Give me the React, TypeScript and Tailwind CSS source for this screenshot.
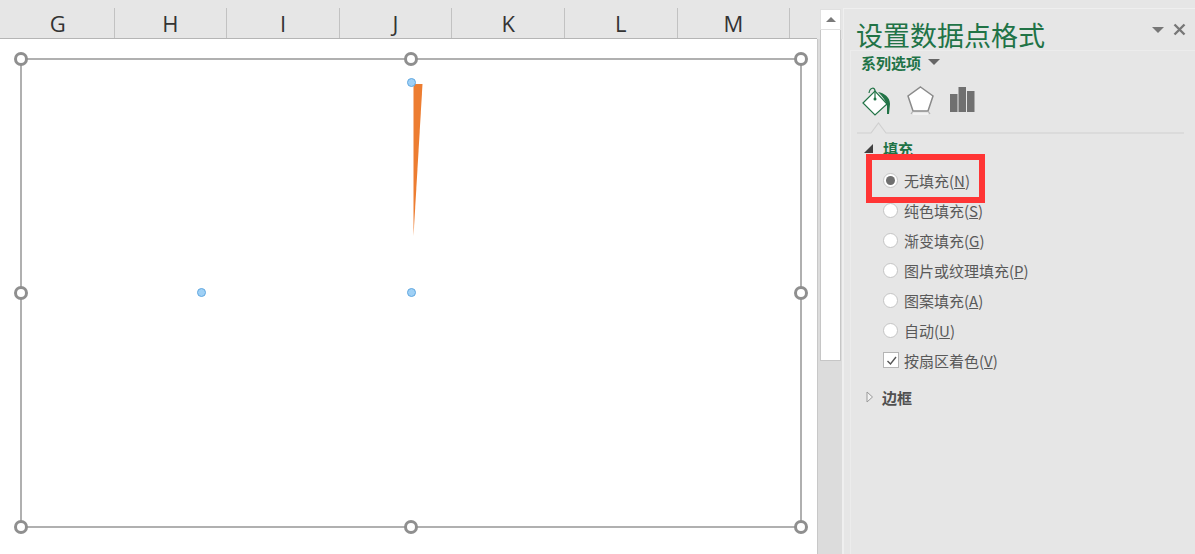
import React from "react";

const columns = ["G", "H", "I", "J", "K", "L", "M"];

const fillOptions = [
  { label: "无填充", key: "N", checked: true },
  { label: "纯色填充", key: "S", checked: false },
  { label: "渐变填充", key: "G", checked: false },
  { label: "图片或纹理填充", key: "P", checked: false },
  { label: "图案填充", key: "A", checked: false },
  { label: "自动", key: "U", checked: false },
];

function Handle({ className }: { className: string }) {
  return (
    <div
      className={
        "absolute w-[14px] h-[14px] rounded-full bg-white border-[3px] border-[#8f8f8f] " +
        className
      }
    />
  );
}

function Dot({ className }: { className: string }) {
  return (
    <div
      className={
        "absolute w-[9px] h-[9px] rounded-full bg-[#9fd0f5] border border-[#62a8e0] " +
        className
      }
    />
  );
}

function BucketIcon() {
  return (
    <svg width="32" height="34" viewBox="0 0 32 34" className="shrink-0 ml-[-1px]">
      <path d="M3 17 L15 5 L27 18 L15 29 Z" fill="#fff" stroke="#217346" strokeWidth="1.2" />
      <path d="M9 7 C10 1 15 1 15 5 L15 12" fill="none" stroke="#217346" strokeWidth="1.2" />
      <circle cx="15" cy="13" r="1.5" fill="#217346" />
      <path d="M18 6 C24 7 30 11 30 18 L29 28 L27 28 L27 20 C26 15 23 11 18 6 Z" fill="#217346" />
    </svg>
  );
}

function ShapeIcon() {
  return (
    <svg width="30" height="32" viewBox="0 0 30 32" className="shrink-0">
      <path d="M14.5 2 L27 11 L22 26 L7 26 L2 11 Z" fill="#fff" stroke="#8a8a8a" strokeWidth="1.5" />
      <path d="M7 26 L5 29 M22 26 L24 29" stroke="#b0b0b0" strokeWidth="1.2" />
      <rect x="7" y="28" width="15" height="2" fill="#f2f2f2" />
    </svg>
  );
}

function BarsIcon() {
  return (
    <svg width="26" height="28" viewBox="0 0 26 28" className="shrink-0">
      <rect x="0" y="8" width="7.5" height="18" fill="#707070" />
      <rect x="8.5" y="1" width="7.5" height="25" fill="#707070" />
      <rect x="17" y="5" width="7.5" height="21" fill="#707070" />
    </svg>
  );
}

function OptionRow({
  label,
  hotkey,
  checked,
}: {
  label: string;
  hotkey: string;
  checked: boolean;
}) {
  return (
    <div className="flex items-center h-[30px] pl-[32px] text-[15px] text-[#595959]">
      <div className="w-[15px] h-[15px] rounded-full bg-white border border-[#c4c4c4] flex items-center justify-center shrink-0">
        {checked && <div className="w-[9px] h-[9px] rounded-full bg-[#6f6f6f]" />}
      </div>
      <span className="ml-[6px] leading-none">
        {label}(<u>{hotkey}</u>)
      </span>
    </div>
  );
}

export default function App() {
  return (
    <div
      className="flex w-[1195px] h-[554px] overflow-hidden bg-[#e6e6e6]"
      style={{ fontFamily: '"Noto Sans CJK SC", "Noto Sans", sans-serif' }}
    >
      {/* sheet */}
      <div className="flex flex-col w-[817px] shrink-0">
        <div className="flex h-[39px] pt-[8px] pl-[2px] border-b border-[#b5b5b5] shrink-0">
          {columns.map((c) => (
            <div
              key={c}
              className="w-[112.6px] shrink-0 flex items-center justify-center border-r border-[#c2c2c2] text-[22px] leading-none text-[#333333]"
              style={{ fontFamily: '"Open Sans", sans-serif' }}
            >
              {c}
            </div>
          ))}
        </div>
        <div className="flex-1 bg-white pt-[19px] pl-[20px]">
          <div className="relative w-[782px] h-[470px] border-[2px] border-[#b0b0b0] bg-white">
            <Handle className="left-[-8px] top-[-8px]" />
            <Handle className="left-[382px] top-[-8px]" />
            <Handle className="right-[-8px] top-[-8px]" />
            <Handle className="left-[-8px] top-[226px]" />
            <Handle className="right-[-8px] top-[226px]" />
            <Handle className="left-[-8px] bottom-[-8px]" />
            <Handle className="left-[382px] bottom-[-8px]" />
            <Handle className="right-[-8px] bottom-[-8px]" />
            <svg
              width="12"
              height="152"
              viewBox="0 0 12 152"
              className="absolute left-[390px] top-[24px]"
            >
              <path d="M1.5 0 L10.5 0 L1.5 152 Z" fill="#ed7d31" />
            </svg>
            <Dot className="left-[385px] top-[18px]" />
            <Dot className="left-[175px] top-[228px]" />
            <Dot className="left-[385px] top-[228px]" />
          </div>
        </div>
      </div>

      {/* scrollbar */}
      <div className="w-[26px] shrink-0 flex flex-col relative">
        <div className="h-[39px]" />
        <div className="flex-1 bg-[#dcdcdc] border-l border-[#c8c8c8] border-r border-r-[#efefef]" />
        <div className="absolute left-[3px] top-[9px] w-[21px] flex flex-col">
          <div className="h-[21px] bg-white border border-[#e0e0e0] flex items-center justify-center">
            <div className="w-0 h-0 border-l-[5px] border-r-[5px] border-b-[5px] border-l-transparent border-r-transparent border-b-[#7a7a7a]" />
          </div>
          <div className="h-[331px] bg-white border border-t-0 border-[#c6c6c6]" />
        </div>
      </div>

      {/* format pane */}
      <div className="flex-1 mt-[8px] border-t border-l border-[#efefef] flex flex-col">
        <div className="flex h-[41px] shrink-0 pl-[13px] pr-[9px] items-center justify-between">
          <span className="text-[27px] leading-none text-[#217346] font-normal mt-[9px] ml-[-1px]">
            设置数据点格式
          </span>
          <div className="flex items-center gap-[9px]">
            <div className="w-0 h-0 border-l-[6px] border-r-[6px] border-t-[6px] border-l-transparent border-r-transparent border-t-[#777777]" />
            <svg width="13" height="13" viewBox="0 0 13 13">
              <path d="M1.5 1.5 L11.5 11.5 M11.5 1.5 L1.5 11.5" stroke="#777777" strokeWidth="2.4" />
            </svg>
          </div>
        </div>

        <div className="flex-1 ml-[6px] border-t border-l border-[#ececec] relative">
          <div className="flex items-center h-[26px] pl-[10px] mt-[-2px]">
            <span className="text-[15px] font-bold leading-none text-[#217346]">系列选项</span>
            <div className="ml-[7px] w-0 h-0 border-l-[6px] border-r-[6px] border-t-[6px] border-l-transparent border-r-transparent border-t-[#666666]" />
          </div>
          <div className="flex items-start h-[34px] pl-[10px] mt-[11px]">
            <BucketIcon />
            <div className="ml-[14px] mt-[-1px]">
              <ShapeIcon />
            </div>
            <div className="ml-[14px]">
              <BarsIcon />
            </div>
          </div>

          <svg width="327" height="12" viewBox="0 0 327 12" className="ml-[6px] block mt-[2px]">
            <path
              d="M0 11 L14 11 L21.5 1 L29 11 L327 11"
              fill="none"
              stroke="#d0d0d0"
              strokeWidth="1.2"
            />
          </svg>

          <div className="flex items-center h-[20px] pl-[12px] mt-[4px]">
            <svg width="11" height="11" viewBox="0 0 11 11">
              <path d="M10 1 L10 10 L1 10 Z" fill="#404040" />
            </svg>
            <span className="ml-[9px] text-[15px] font-bold leading-none text-[#217346]">填充</span>
          </div>

          <div className="mt-[7px]">
            {fillOptions.map((o) => (
              <OptionRow key={o.key} label={o.label} hotkey={o.key} checked={o.checked} />
            ))}
            <div className="flex items-center h-[30px] pl-[32px] text-[15px] text-[#595959]">
              <div className="w-[16px] h-[16px] bg-white border border-[#b5b5b5] flex items-center justify-center shrink-0">
                <svg width="11" height="11" viewBox="0 0 11 11">
                  <path d="M1.5 6 L4.5 9 L10 2" fill="none" stroke="#555555" strokeWidth="1.4" />
                </svg>
              </div>
              <span className="ml-[5px] leading-none">
                按扇区着色(<u>V</u>)
              </span>
            </div>
          </div>

          <div className="flex items-center h-[20px] pl-[15px] mt-[12px]">
            <svg width="8" height="12" viewBox="0 0 8 12">
              <path d="M1 1 L6.5 6 L1 11 Z" fill="#f2f2f2" stroke="#9a9a9a" strokeWidth="1" />
            </svg>
            <span className="ml-[8px] text-[15px] font-bold leading-none text-[#505050]">边框</span>
          </div>

          <div className="absolute left-[15px] top-[103px] w-[119px] h-[49px] border-[6px] border-[#ff3535]" />
        </div>
      </div>
    </div>
  );
}
